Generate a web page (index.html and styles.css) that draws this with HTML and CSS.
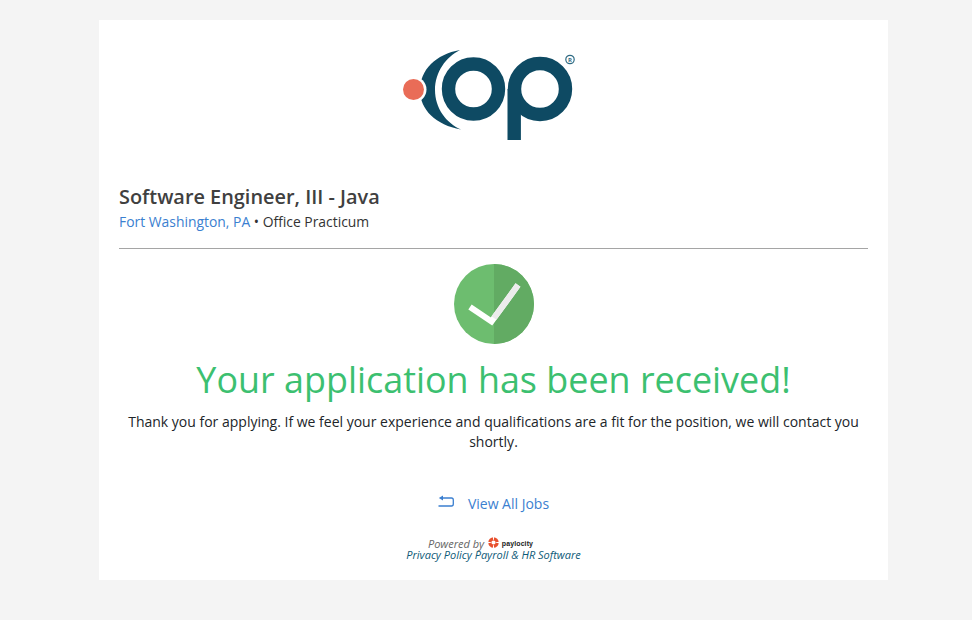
FILE: index.html
```html
<!DOCTYPE html>
<html lang="en">
<head>
<meta charset="utf-8">
<title>Application received</title>
<link rel="stylesheet" href="styles.css">
</head>
<body>
<main class="card">
  <div class="logo-wrap">
    <svg class="logo" width="176" height="94" viewBox="400 48 176 94" aria-label="OP logo">
      <path d="M460 50 C436 54 420 70 420 90 C420 110 436 125 461 129.500 C446 123 435 108 435 90 C435 72 446 57 460 50 Z" fill="#0e4a63"/>
      <circle cx="413.500" cy="89.500" r="13" fill="#fff"/>
      <circle cx="413.500" cy="89.500" r="10.500" fill="#e96c57"/>
      <circle cx="473.500" cy="89" r="25" fill="none" stroke="#0e4a63" stroke-width="13.400"/>
      <circle cx="540" cy="89" r="25.500" fill="none" stroke="#0e4a63" stroke-width="13.400"/>
      <rect x="507.500" y="89" width="13.400" height="51" fill="#0e4a63"/>
      <circle cx="570" cy="59.500" r="4.200" fill="none" stroke="#2f6a82" stroke-width="1.200"/>
      <text x="570" y="61.700" class="reg">R</text>
    </svg>
  </div>
  <h1 class="title">Software Engineer, III - Java</h1>
  <p class="meta"><a class="link" href="#">Fort Washington, PA</a> • Office Practicum</p>
  <hr class="rule">
  <div class="check-wrap">
    <svg width="80" height="80" viewBox="0 0 80 80" aria-hidden="true">
      <circle cx="40" cy="40" r="40" fill="#6dbd6f"/>
      <path d="M40 0 A40 40 0 0 1 40 80 Z" fill="#62ab63"/>
      <path d="M16 43 L37.500 57.500 L64 21" fill="none" stroke="#fff" stroke-width="6"/>
      <path d="M40 54.100 L64 21" fill="none" stroke="#ececec" stroke-width="6"/>
    </svg>
  </div>
  <h2 class="headline">Your application has been received!</h2>
  <p class="thanks">Thank you for applying. If we feel your experience and qualifications are a fit for the position, we will contact you shortly.</p>
  <div class="back-row">
    <a class="back" href="#">
      <svg class="back-icon" width="16" height="12" viewBox="0 0 16 12" aria-hidden="true">
        <path d="M5 0.500 L0.800 3 L5 5.500 Z" fill="#3b7fd0"/>
        <path d="M4 3 H13.500 Q15.300 3 15.300 5 V9 Q15.300 11 13.500 11 H0.500" fill="none" stroke="#3b7fd0" stroke-width="1.300"/>
      </svg>
      <span>View All Jobs</span>
    </a>
  </div>
  <footer class="foot">
    <div class="powered">Powered by
      <svg class="pay-mark" width="11" height="11" viewBox="0 0 12 12" aria-hidden="true">
        <circle cx="6" cy="6" r="4" fill="none" stroke="#e8502e" stroke-width="3.400"/>
        <path d="M6 0 V3 M6 9 V12 M0 6 H3 M9 6 H12" stroke="#fff" stroke-width="1.100"/>
      </svg>
      <span class="pay-name">paylocity</span>
    </div>
    <div class="foot-links"><a href="#">Privacy Policy</a> <a href="#">Payroll &amp; HR Software</a></div>
  </footer>
</main>
</body>
</html>
```
FILE: styles.css
```css
* { box-sizing: border-box; }
html, body { height: 100%; }
body {
  margin: 0;
  background: #f4f4f4;
  font-family: "Open Sans", sans-serif;
  color: #212529;
  overflow: hidden;
}
.card {
  width: 789px;
  height: 560px;
  margin: 20px 0 0 99px;
  padding: 28px 20px 0;
  background: #fff;
}
.logo-wrap { display: flex; justify-content: center; height: 94px; margin-left: -11px; }
.logo { display: block; }
.reg { font-size: 6px; font-weight: 700; fill: #2f6a82; text-anchor: middle; font-family: "Open Sans", sans-serif; }
.title {
  margin: 41px 0 0;
  font-size: 19.9px;
  line-height: 27px;
  font-weight: 600;
  color: #404040;
}
.meta { margin: 1px 0 0; font-size: 13.9px; line-height: 22px; color: #333; }
.link { color: #3b7fd0; text-decoration: none; }
.rule { margin: 15px 0 0; border: 0; border-top: 1px solid #a5a5a5; }
.check-wrap { display: flex; justify-content: center; margin-top: 15px; height: 80px; }
.headline {
  margin: 13px 0 0;
  text-align: center;
  font-size: 35.9px;
  line-height: 46px;
  font-weight: 400;
  color: #3cc070;
}
.thanks { margin: 9px 0 0; text-align: center; font-size: 14px; line-height: 20px; color: #212529; }
.back-row { display: flex; justify-content: center; margin-top: 41px; }
.back { display: flex; align-items: center; gap: 14px; font-size: 14px; line-height: 22px; color: #3b7fd0; text-decoration: none; }
.back-icon { margin-top: -6px; }
.foot { margin-top: 22px; text-align: center; font-size: 11px; line-height: 11px; font-style: italic; }
.powered { height: 12px; padding-right: 26px; color: #666; }
.pay-mark { vertical-align: 0; margin: 0 0 0 1px; }
.pay-name { vertical-align: 2px; font-family: "Liberation Sans", sans-serif; font-style: normal; font-weight: 700; font-size: 7px; line-height: 7px; color: #222; letter-spacing: 0.1px; }
.foot-links a { color: #0e5a78; text-decoration: none; }
```
